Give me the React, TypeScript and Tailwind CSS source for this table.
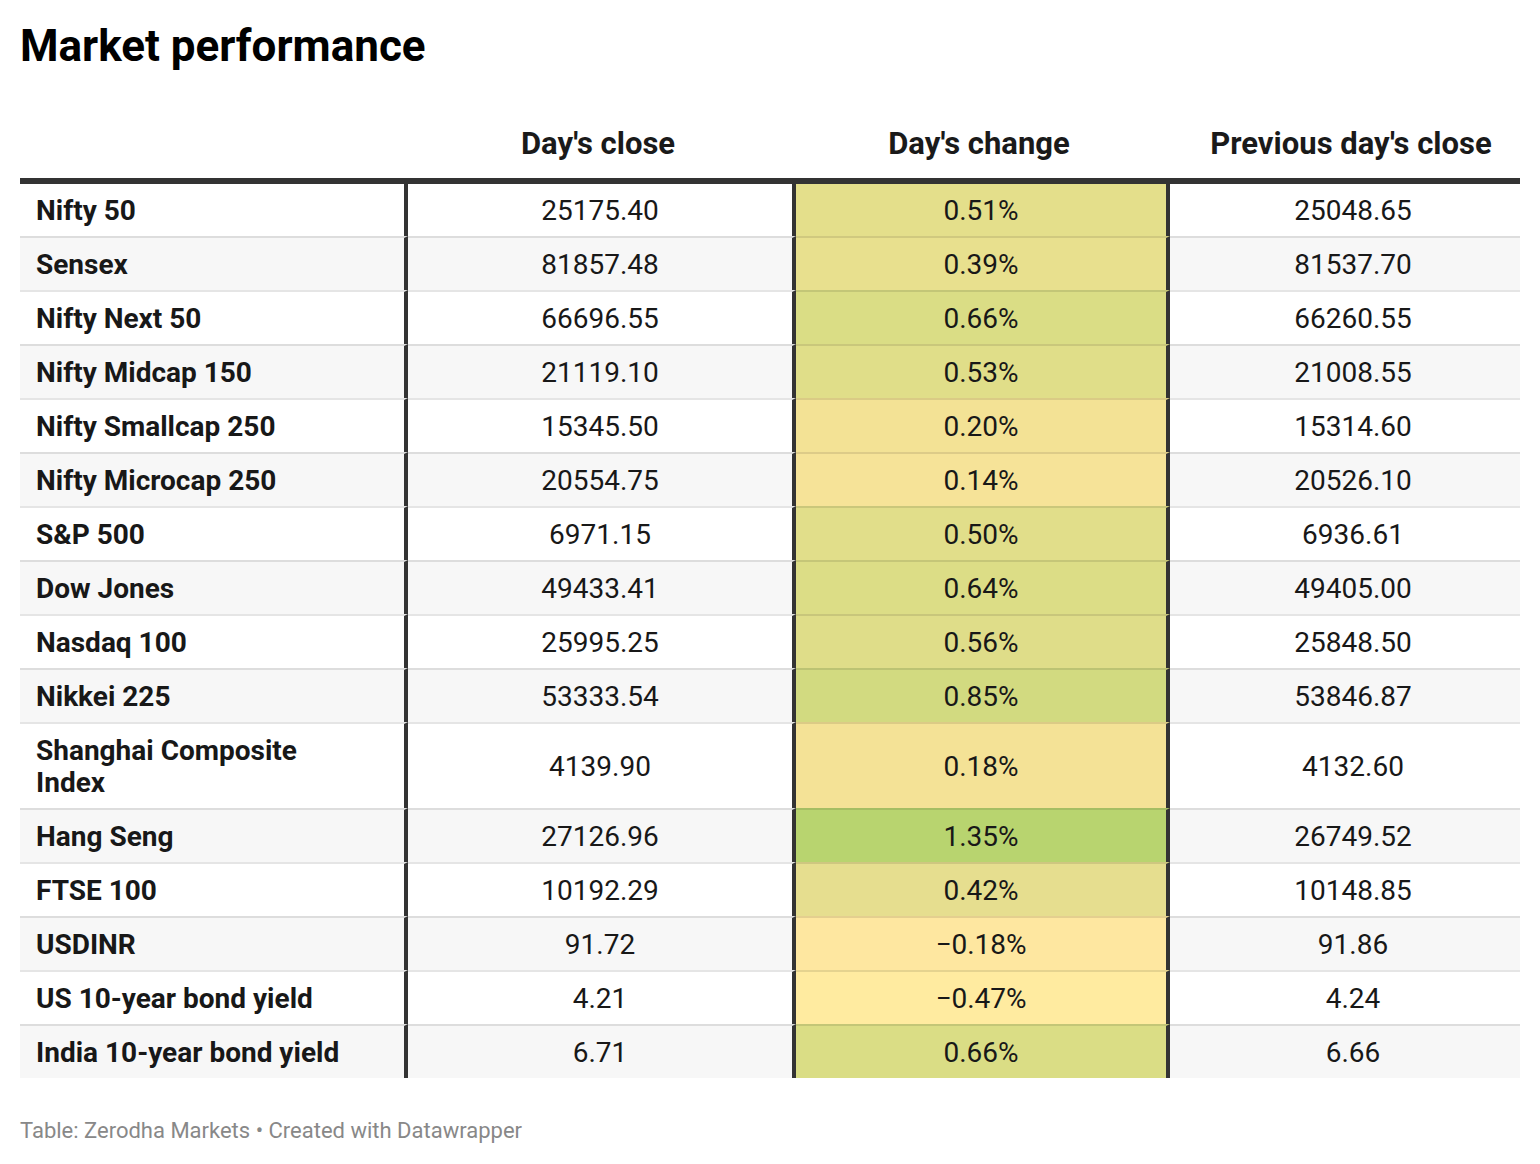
import React from "react";

type Row = {
  name: React.ReactNode;
  close: string;
  change: string;
  bg: string;
  prev: string;
  tall?: boolean;
};

const rows: Row[] = [
  { name: "Nifty 50", close: "25175.40", change: "0.51%", bg: "#e4df8b", prev: "25048.65" },
  { name: "Sensex", close: "81857.48", change: "0.39%", bg: "#e8e08e", prev: "81537.70" },
  { name: "Nifty Next 50", close: "66696.55", change: "0.66%", bg: "#dadd85", prev: "66260.55" },
  { name: "Nifty Midcap 150", close: "21119.10", change: "0.53%", bg: "#e0de89", prev: "21008.55" },
  { name: "Nifty Smallcap 250", close: "15345.50", change: "0.20%", bg: "#f3e295", prev: "15314.60" },
  { name: "Nifty Microcap 250", close: "20554.75", change: "0.14%", bg: "#f6e398", prev: "20526.10" },
  { name: "S&P 500", close: "6971.15", change: "0.50%", bg: "#e1de8a", prev: "6936.61" },
  { name: "Dow Jones", close: "49433.41", change: "0.64%", bg: "#dcdd86", prev: "49405.00" },
  { name: "Nasdaq 100", close: "25995.25", change: "0.56%", bg: "#dfdd89", prev: "25848.50" },
  { name: "Nikkei 225", close: "53333.54", change: "0.85%", bg: "#d2da80", prev: "53846.87" },
  {
    name: (
      <>
        Shanghai Composite
        <br />
        Index
      </>
    ),
    close: "4139.90",
    change: "0.18%",
    bg: "#f4e296",
    prev: "4132.60",
    tall: true,
  },
  { name: "Hang Seng", close: "27126.96", change: "1.35%", bg: "#b8d46f", prev: "26749.52" },
  { name: "FTSE 100", close: "10192.29", change: "0.42%", bg: "#e6de8f", prev: "10148.85" },
  { name: "USDINR", close: "91.72", change: "−0.18%", bg: "#fee7a0", prev: "91.86" },
  { name: "US 10-year bond yield", close: "4.21", change: "−0.47%", bg: "#ffeba0", prev: "4.24" },
  { name: "India 10-year bond yield", close: "6.71", change: "0.66%", bg: "#dadd85", prev: "6.66" },
];

export default function App() {
  return (
    <div
      className="w-[1540px] bg-white px-[20px] pt-[20px] text-[#181818]"
      style={{ fontFamily: "Roboto, 'Liberation Sans', sans-serif" }}
    >
      <h1 className="text-[44px] font-bold leading-[52px] text-black">Market performance</h1>

      <div className="mt-[54px] w-[1500px]">
        <div className="grid grid-cols-[388px_388px_374px_350px] border-b-[6px] border-[#333333] pb-[16px] text-[31px] font-bold leading-[36px] text-[#1a1a1a]">
          <div />
          <div className="pl-[16px] pr-[24px] text-center">Day's close</div>
          <div className="pl-[16px] pr-[24px] text-center">Day's change</div>
          <div className="pl-[16px] pr-[4px] text-center">Previous day's close</div>
        </div>

        {rows.map((r, i) => {
          const first = i === 0;
          const stripe = i % 2 === 1 ? "bg-[#f7f7f7]" : "bg-white";
          const top = first ? "" : "border-t-2 border-t-black/10";
          const h = r.tall ? "min-h-[84px]" : "min-h-[52px]";
          return (
            <div
              key={i}
              className={`grid grid-cols-[388px_388px_374px_350px] text-[28px] leading-[32px] ${stripe}`}
            >
              <div
                className={`flex items-center border-r-4 border-r-[#333333] px-[16px] pt-[11px] pb-[9px] font-bold ${top} ${h}`}
              >
                <span>{r.name}</span>
              </div>
              <div
                className={`flex items-center justify-center border-r-4 border-r-[#333333] px-[16px] pt-[11px] pb-[9px] ${top} ${h}`}
              >
                {r.close}
              </div>
              <div
                className={`flex items-center justify-center border-r-4 border-r-[#333333] px-[16px] pt-[11px] pb-[9px] ${top} ${h}`}
                style={{ backgroundColor: r.bg }}
              >
                {r.change}
              </div>
              <div className={`flex items-center justify-center pt-[11px] pb-[9px] pl-[16px] ${top} ${h}`}>
                {r.prev}
              </div>
            </div>
          );
        })}
      </div>

      <div className="mt-[40px] pb-[26px] text-[22px] leading-[26px] text-[#888888]">
        Table: Zerodha Markets • Created with Datawrapper
      </div>
    </div>
  );
}
